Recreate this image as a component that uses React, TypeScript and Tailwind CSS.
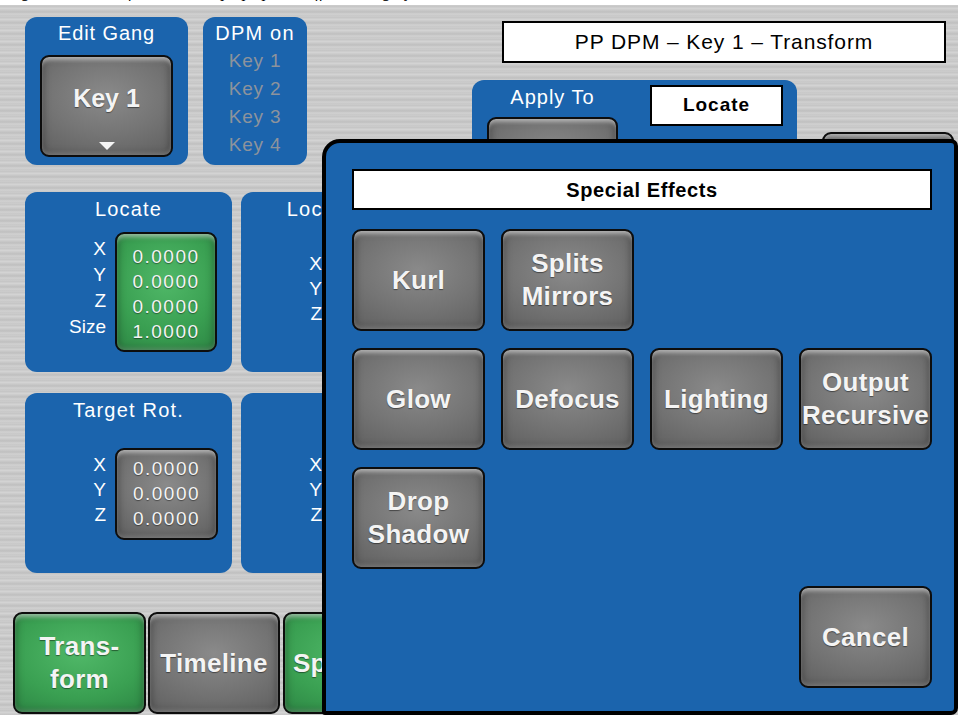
import React from "react";

const grayBtn =
  "rounded-[9px] border-2 border-[#0d0d0d] bg-[radial-gradient(ellipse_90%_80%_at_50%_40%,#8a8a8a_0%,#747474_50%,#5c5c5c_100%)] shadow-[inset_0_5px_4px_-2px_rgba(255,255,255,0.55),inset_0_-4px_4px_-2px_rgba(255,255,255,0.25),inset_0_0_8px_rgba(0,0,0,0.45)]";
const greenBtn =
  "rounded-[9px] border-2 border-[#0d0d0d] bg-[radial-gradient(ellipse_90%_80%_at_50%_40%,#50b868_0%,#3aa052_55%,#2b8242_100%)] shadow-[inset_0_5px_4px_-2px_rgba(255,255,255,0.5),inset_0_-4px_4px_-2px_rgba(255,255,255,0.2),inset_0_0_8px_rgba(0,0,0,0.45)]";
const label = "text-[#f4f4f4] [text-shadow:0_1px_1px_rgba(0,0,0,0.45)]";

function BigBtn({ lines, green, pad }: { lines: string[]; green?: boolean; pad?: string }) {
  return (
    <div
      className={`${green ? greenBtn : grayBtn} flex h-full w-full flex-col items-center justify-center text-[26px] font-bold leading-[33px] tracking-[0.3px] ${label} ${pad ?? ""}`}
    >
      {lines.map((l) => (
        <span key={l} className="block h-[33px] overflow-visible whitespace-nowrap">
          {l}
        </span>
      ))}
    </div>
  );
}

function ValuePanel({
  title,
  labels,
  values,
  green,
}: {
  title: string;
  labels: string[];
  values: string[];
  green?: boolean;
}) {
  const four = labels.length === 4;
  return (
    <div className="flex h-[180px] w-[207px] shrink-0 flex-col rounded-[12px] bg-[#1b64ad]">
      <div className="pt-[5px] text-center text-[20px] leading-[24px] tracking-[1.2px] text-white">{title}</div>
      <div className={`flex ${four ? "mt-[11px]" : "mt-[26px]"}`}>
        <div
          className={`ml-[21px] flex w-[60px] flex-col items-end text-[19px] text-white ${
            four ? "pt-[4px] leading-[26px]" : "pt-[4px] leading-[25px]"
          }`}
        >
          {labels.map((l) => (
            <span key={l}>{l}</span>
          ))}
        </div>
        <div
          className={`${green ? greenBtn : grayBtn} ml-[9px] flex flex-col items-center text-[19px] leading-[25px] tracking-[1.5px] ${label} ${
            four ? "h-[120px] w-[102px] pt-[10px]" : "h-[92px] w-[103px] pt-[6px]"
          }`}
        >
          {values.map((v, i) => (
            <span key={i}>{v}</span>
          ))}
        </div>
      </div>
    </div>
  );
}

export default function App() {
  const effects: { lines: string[]; cls: string }[] = [
    { lines: ["Kurl"], cls: "col-start-1 row-start-1" },
    { lines: ["Splits", "Mirrors"], cls: "col-start-2 row-start-1" },
    { lines: ["Glow"], cls: "col-start-1 row-start-2" },
    { lines: ["Defocus"], cls: "col-start-2 row-start-2" },
    { lines: ["Lighting"], cls: "col-start-3 row-start-2" },
    { lines: ["Output", "Recursive"], cls: "col-start-4 row-start-2" },
    { lines: ["Drop", "Shadow"], cls: "col-start-1 row-start-3" },
    { lines: ["Cancel"], cls: "col-start-4 row-start-4" },
  ];

  return (
    <div className="relative h-[715px] w-[958px] overflow-hidden bg-white font-['Liberation_Sans',Arial,sans-serif]">
      {/* clipped caption */}
      <div className="h-[5px] overflow-hidden bg-white">
        <div className="-mt-[16px] whitespace-nowrap pl-[8px] font-['Liberation_Serif',serif] text-[16px] italic leading-[16px] text-black">
          Figure 2-51.  Transform Menu Pop-up Special Effects Category Selection
        </div>
      </div>

      {/* brushed metal main area */}
      <div className="flex h-[710px] flex-col bg-[repeating-linear-gradient(180deg,#cdcdcd_0px,#c4c4c4_2px,#d6d6d6_3px,#cacaca_5px,#bfbfbf_7px,#d1d1d1_9px,#c7c7c7_11px)]">
        {/* row 1 */}
        <div className="mt-[12px] flex h-[148px] shrink-0 items-start pl-[25px]">
          <div className="flex h-[148px] w-[163px] shrink-0 flex-col items-center rounded-[12px] bg-[#1b64ad]">
            <div className="pt-[4px] text-[20px] leading-[24px] tracking-[0.9px] text-white">Edit Gang</div>
            <div className={`${grayBtn} mt-[10px] flex h-[102px] w-[133px] flex-col items-center`}>
              <span className={`pt-[26px] text-[25px] font-bold leading-[30px] ${label}`}>Key 1</span>
              <svg className="mt-[29px]" width="16" height="8" viewBox="0 0 16 8">
                <polygon points="0,0 16,0 8,8" fill="#f4f4f4" />
              </svg>
            </div>
          </div>
          <div className="ml-[15px] flex h-[148px] w-[104px] shrink-0 flex-col items-center rounded-[12px] bg-[#1b64ad]">
            <div className="pt-[4px] text-[20px] leading-[24px] tracking-[1.2px] text-white">DPM on</div>
            <div className="mt-[2px] flex flex-col items-center text-[19px] leading-[28px] tracking-[0.8px] text-[#8d939c]">
              <span>Key 1</span>
              <span>Key 2</span>
              <span>Key 3</span>
              <span>Key 4</span>
            </div>
          </div>
          <div className="ml-[165px] flex flex-col">
            <div className="ml-[30px] mt-[4px] flex h-[42px] w-[444px] items-center justify-center border-2 border-black bg-white text-[21px] tracking-[0.9px] text-black">
              PP DPM – Key 1 – Transform
            </div>
            <div className="mt-[17px] flex items-start">
              <div className="flex h-[130px] w-[325px] items-start rounded-t-[12px] bg-[#1b64ad]">
                <div className="ml-[15px] flex w-[131px] flex-col items-center">
                  <div className="pt-[5px] text-[20px] leading-[24px] tracking-[1px] text-white">Apply To</div>
                  <div className={`${grayBtn} mt-[8px] h-[90px] w-[131px]`} />
                </div>
                <div className="ml-[32px] mt-[5px] flex h-[41px] w-[133px] items-center justify-center border-2 border-black bg-white text-[19px] font-bold tracking-[1px] text-black">
                  Locate
                </div>
              </div>
              <div className={`${grayBtn} ml-[25px] mt-[52px] h-[90px] w-[132px]`} />
            </div>
          </div>
        </div>

        {/* row 2 */}
        <div className="mt-[27px] flex gap-[9px] pl-[25px]">
          <ValuePanel
            title="Locate"
            labels={["X", "Y", "Z", "Size"]}
            values={["0.0000", "0.0000", "0.0000", "1.0000"]}
            green
          />
          <ValuePanel title="Locate Rot." labels={["X", "Y", "Z"]} values={["0.0000", "0.0000", "0.0000"]} />
        </div>

        {/* row 3 */}
        <div className="mt-[21px] flex gap-[9px] pl-[25px]">
          <ValuePanel title="Target Rot." labels={["X", "Y", "Z"]} values={["0.0000", "0.0000", "0.0000"]} />
          <ValuePanel title="Spin" labels={["X", "Y", "Z"]} values={["0.0000", "0.0000", "0.0000"]} />
        </div>

        {/* tabs */}
        <div className="mt-[39px] flex gap-[2px] pl-[13px]">
          <div className="h-[102px] w-[133px] shrink-0">
            <BigBtn lines={["Trans-", "form"]} green />
          </div>
          <div className="h-[102px] w-[132px] shrink-0">
            <BigBtn lines={["Timeline"]} />
          </div>
          <div className="ml-[1px] h-[102px] w-[133px] shrink-0">
            <BigBtn lines={["Special"]} green pad="pr-[20px]" />
          </div>
        </div>
      </div>

      {/* Special Effects dialog */}
      <div className="absolute bottom-0 left-[322px] right-0 top-[139px] rounded-bl-[3px] rounded-br-[7px] rounded-tl-[18px] rounded-tr-[7px] border-[4px] border-black bg-[#1b64ad] pl-[26px] pt-[26px]">
        <div className="flex h-[41px] w-[580px] items-center justify-center border-2 border-black bg-white text-[20px] font-bold tracking-[0.6px] text-black">
          Special Effects
        </div>
        <div className="mt-[19px] grid grid-cols-[repeat(4,133px)] grid-rows-[repeat(4,102px)] gap-x-[16px] gap-y-[17px]">
          {effects.map((e) => (
            <div key={e.lines.join()} className={e.cls}>
              <BigBtn lines={e.lines} />
            </div>
          ))}
        </div>
      </div>
    </div>
  );
}
